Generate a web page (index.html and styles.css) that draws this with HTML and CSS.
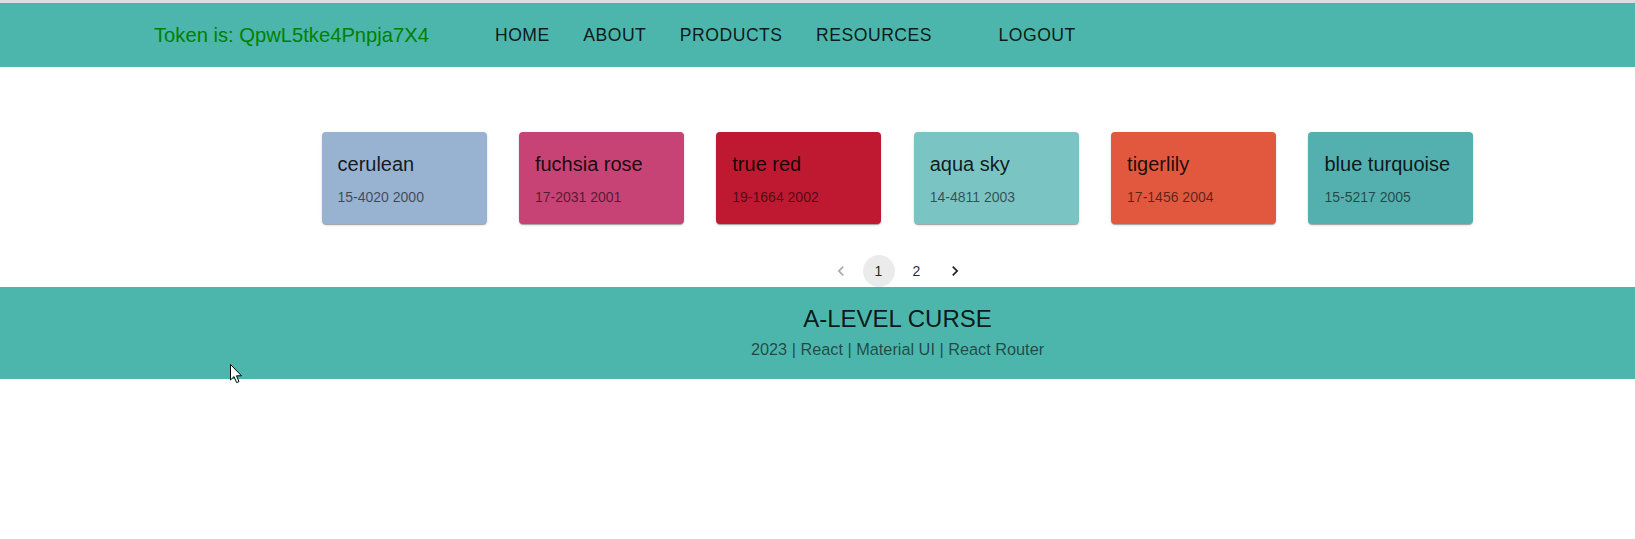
FILE: index.html
```html
<!DOCTYPE html>
<html lang="en">
<head>
<meta charset="utf-8">
<title>A-Level Curse</title>
<link rel="stylesheet" href="styles.css">
</head>
<body>
<div class="topline"></div>
<header class="header">
  <div class="token">Token is: QpwL5tke4Pnpja7X4</div>
  <nav class="nav">
    <a class="nav-link">Home</a>
    <a class="nav-link">About</a>
    <a class="nav-link">Products</a>
    <a class="nav-link">Resources</a>
    <a class="nav-link logout">Logout</a>
  </nav>
</header>
<main class="main">
  <div class="cards">
    <div class="card c-cerulean"><div class="card-title">cerulean</div><div class="card-sub">15-4020 2000</div></div>
    <div class="card c-fuchsia"><div class="card-title">fuchsia rose</div><div class="card-sub">17-2031 2001</div></div>
    <div class="card c-truered"><div class="card-title">true red</div><div class="card-sub">19-1664 2002</div></div>
    <div class="card c-aqua"><div class="card-title">aqua sky</div><div class="card-sub">14-4811 2003</div></div>
    <div class="card c-tiger"><div class="card-title">tigerlily</div><div class="card-sub">17-1456 2004</div></div>
    <div class="card c-blueturq"><div class="card-title">blue turquoise</div><div class="card-sub">15-5217 2005</div></div>
  </div>
  <ul class="pagination">
    <li class="page-item disabled"><svg viewBox="0 0 24 24" class="page-icon"><path d="M15.41 7.41 14 6l-6 6 6 6 1.41-1.41L10.83 12z"/></svg></li>
    <li class="page-item selected">1</li>
    <li class="page-item">2</li>
    <li class="page-item"><svg viewBox="0 0 24 24" class="page-icon"><path d="M10 6 8.59 7.41 13.17 12l-4.58 4.59L10 18l6-6z"/></svg></li>
  </ul>
</main>
<footer class="footer">
  <div class="footer-title">A-LEVEL CURSE</div>
  <div class="footer-sub">2023 | React | Material UI | React Router</div>
</footer>
<svg class="cursor" viewBox="0 0 13 20" width="13" height="20"><path d="M0.5 0.5 L0.5 16 L4 12.6 L6.6 18.6 L9 17.6 L6.5 11.8 L11.5 11.8 Z" fill="#fff" stroke="#000" stroke-width="1"/></svg>
</body>
</html>
```

FILE: styles.css
```css
html, body {
  margin: 0;
  padding: 0;
  background: #ffffff;
  font-family: "Liberation Sans", Arial, sans-serif;
}

.topline {
  height: 3px;
  background: #dedede;
}

.header {
  height: 64px;
  background: #4db6ac;
  display: flex;
  align-items: center;
  padding-left: 154px;
}

.token {
  font-size: 20.2px;
  color: #008000;
  margin-right: 66px;
  margin-top: 1px;
}

.nav {
  display: flex;
  align-items: center;
  gap: 33.5px;
}

.nav-link {
  font-size: 17.6px;
  letter-spacing: 0.5px;
  text-transform: uppercase;
  color: rgba(0, 0, 0, 0.87);
  cursor: pointer;
}

.nav-link.logout {
  margin-left: 33px;
}

.main {
  display: flex;
  flex-direction: column;
  align-items: center;
  padding: 65px 0 0 160px;
}

.cards {
  display: flex;
  gap: 32.4px;
}

.card {
  width: 165px;
  height: 92px;
  box-sizing: border-box;
  padding: 16px;
  border-radius: 4px;
  box-shadow: 0 2px 1px -1px rgba(0, 0, 0, 0.2), 0 1px 1px 0 rgba(0, 0, 0, 0.14), 0 1px 3px 0 rgba(0, 0, 0, 0.12);
}

.card-title {
  font-size: 20px;
  line-height: 32px;
  margin-bottom: 7px;
  color: rgba(0, 0, 0, 0.87);
  white-space: nowrap;
}

.card-sub {
  font-size: 14px;
  line-height: 20px;
  color: rgba(0, 0, 0, 0.6);
}

.c-cerulean { background: #98b2d1; }
.c-fuchsia { background: #c74375; }
.c-truered { background: #bf1932; }
.c-aqua { background: #7bc4c4; }
.c-tiger { background: #e2583e; }
.c-blueturq { background: #53b0ae; }

.pagination {
  list-style: none;
  margin: 31px 0 0 0;
  padding: 0;
  display: flex;
}

.page-item {
  width: 32px;
  height: 32px;
  margin: 0 3px;
  border-radius: 16px;
  display: flex;
  align-items: center;
  justify-content: center;
  font-size: 14px;
  color: rgba(0, 0, 0, 0.87);
}

.page-item.selected {
  background: rgba(0, 0, 0, 0.08);
}

.page-item.disabled {
  opacity: 0.38;
}

.page-icon {
  width: 20px;
  height: 20px;
  fill: rgba(0, 0, 0, 0.87);
}

.footer {
  background: #4db6ac;
  padding: 16px 0 18.5px 160px;
  text-align: center;
}

.footer-title {
  font-size: 24px;
  line-height: 32px;
  color: rgba(0, 0, 0, 0.87);
}

.footer-sub {
  font-size: 16.3px;
  line-height: 24px;
  margin-top: 1.5px;
  color: rgba(0, 0, 0, 0.6);
}

.cursor {
  position: absolute;
  left: 230px;
  top: 364px;
}
```
